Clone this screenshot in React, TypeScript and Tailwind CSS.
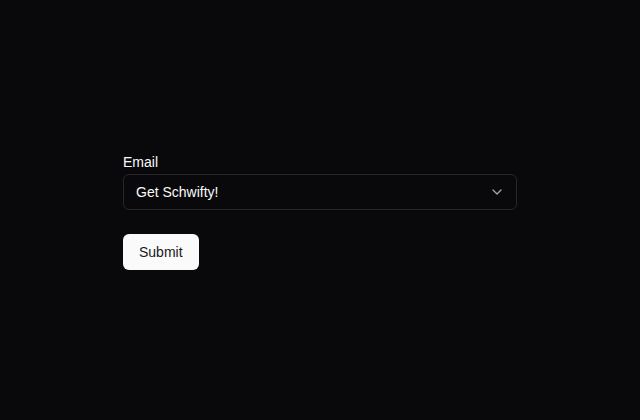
import React, { useState } from 'react';

const App: React.FC = () => {
  const [value, setValue] = useState('Get Schwifty!');

  return (
    <div className="min-h-screen w-full bg-[#09090b] flex items-center justify-center font-['Liberation_Sans',Arial,sans-serif]">
      <form onSubmit={(e) => e.preventDefault()} className="w-[394px] flex flex-col mt-[4px]">
        <label className="text-sm leading-4 pb-1 text-[#fafafa]">Email</label>
        <div className="relative">
          <select
            value={value}
            onChange={(e) => setValue(e.target.value)}
            className="w-full h-9 pl-3 pr-8 appearance-none rounded-md border border-[#27272a] bg-transparent text-sm text-[#fafafa] outline-none"
          >
            <option className="bg-[#09090b]">Get Schwifty!</option>
            <option className="bg-[#09090b]">Show me what you got</option>
          </select>
          <svg
            className="absolute right-[12px] top-1/2 -translate-y-1/2 pointer-events-none text-[#a1a1aa]"
            width="16"
            height="16"
            viewBox="0 0 24 24"
            fill="none"
            stroke="currentColor"
            strokeWidth="2"
            strokeLinecap="round"
            strokeLinejoin="round"
          >
            <path d="m6 9 6 6 6-6" />
          </svg>
        </div>
        <div className="mt-6">
          <button
            type="submit"
            className="h-9 px-4 rounded-md bg-[#fafafa] text-sm text-[#18181b]"
          >
            Submit
          </button>
        </div>
      </form>
    </div>
  );
};

export default App;
